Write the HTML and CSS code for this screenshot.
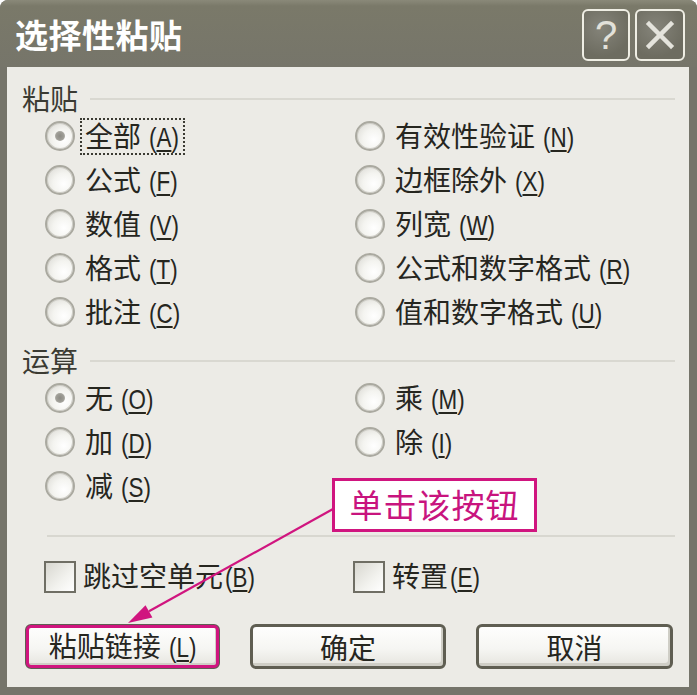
FILE: index.html
```html
<!DOCTYPE html>
<html lang="zh-CN">
<head>
<meta charset="utf-8">
<title>选择性粘贴</title>
<link rel="stylesheet" href="styles.css">
</head>
<body>
<div class="dialog">
  <div class="titlebar">
    <span class="title">选择性粘贴</span>
    <div class="tbtns">
      <span class="tbtn help">?</span>
      <span class="tbtn close"><svg width="30" height="30" viewBox="0 0 30 30"><path d="M4 4 L26 26 M26 4 L4 26" stroke="#e4e3dc" stroke-width="4.5" stroke-linecap="square"/></svg></span>
    </div>
  </div>
  <div class="content">
    <div class="group-head"><span class="group-label">粘贴</span><span class="group-line"></span></div>
    <div class="options">
      <div class="opt"><span class="radio checked"></span><span class="lbl focus">全部 <span class="mn">(<u>A</u>)</span></span></div>
      <div class="opt"><span class="radio"></span><span class="lbl">有效性验证 <span class="mn">(<u>N</u>)</span></span></div>
      <div class="opt"><span class="radio"></span><span class="lbl">公式 <span class="mn">(<u>F</u>)</span></span></div>
      <div class="opt"><span class="radio"></span><span class="lbl">边框除外 <span class="mn">(<u>X</u>)</span></span></div>
      <div class="opt"><span class="radio"></span><span class="lbl">数值 <span class="mn">(<u>V</u>)</span></span></div>
      <div class="opt"><span class="radio"></span><span class="lbl">列宽 <span class="mn">(<u>W</u>)</span></span></div>
      <div class="opt"><span class="radio"></span><span class="lbl">格式 <span class="mn">(<u>T</u>)</span></span></div>
      <div class="opt"><span class="radio"></span><span class="lbl">公式和数字格式 <span class="mn">(<u>R</u>)</span></span></div>
      <div class="opt"><span class="radio"></span><span class="lbl">批注 <span class="mn">(<u>C</u>)</span></span></div>
      <div class="opt"><span class="radio"></span><span class="lbl">值和数字格式 <span class="mn">(<u>U</u>)</span></span></div>
    </div>
    <div class="group-head second"><span class="group-label">运算</span><span class="group-line"></span></div>
    <div class="options">
      <div class="opt"><span class="radio checked"></span><span class="lbl">无 <span class="mn">(<u>O</u>)</span></span></div>
      <div class="opt"><span class="radio"></span><span class="lbl">乘 <span class="mn">(<u>M</u>)</span></span></div>
      <div class="opt"><span class="radio"></span><span class="lbl">加 <span class="mn">(<u>D</u>)</span></span></div>
      <div class="opt"><span class="radio"></span><span class="lbl">除 <span class="mn">(<u>I</u>)</span></span></div>
      <div class="opt"><span class="radio"></span><span class="lbl">减 <span class="mn">(<u>S</u>)</span></span></div>
    </div>
    <div class="sep"></div>
    <div class="checks">
      <div class="opt"><span class="check"></span><span class="lbl">跳过空单元<span class="mn">(<u>B</u>)</span></span></div>
      <div class="opt"><span class="check"></span><span class="lbl">转置<span class="mn">(<u>E</u>)</span></span></div>
    </div>
    <div class="buttons">
      <span class="btn w1 annotated"><span class="btn-text">粘贴链接 <span class="mn">(<u>L</u>)</span></span></span>
      <span class="btn w2"><span class="btn-text">确定</span></span>
      <span class="btn w3"><span class="btn-text">取消</span></span>
    </div>
  </div>
  <svg class="arrow" width="697" height="695" viewBox="0 0 697 695">
    <line x1="333" y1="509" x2="149" y2="611.3" stroke="#d0157f" stroke-width="2.2"/>
    <polygon points="128,623 152.4,617.4 145.5,605.2" fill="#d0157f"/>
  </svg>
  <div class="callout">单击该按钮</div>
</div>
</body>
</html>
```

FILE: styles.css
```css
html, body {
  margin: 0;
  padding: 0;
  background: #ffffff;
}

body {
  width: 697px;
  height: 695px;
  overflow: hidden;
  font-family: "Noto Sans CJK SC", "Noto Sans", sans-serif;
  color: #26261f;
}

.dialog {
  position: relative;
  width: 697px;
  height: 695px;
  background: #75746a;
  border-radius: 8px 8px 0 0;
  box-sizing: border-box;
}

.titlebar {
  height: 67px;
  display: flex;
  align-items: center;
  justify-content: space-between;
  padding: 0 12px 0 15px;
  background: linear-gradient(#8a8979 0, #7a7969 6px, #76756a 100%);
  border-radius: 8px 8px 0 0;
}

.title {
  color: #ffffff;
  font-size: 33px;
  font-weight: 700;
  letter-spacing: 0.5px;
  line-height: 1;
  margin-top: 2px;
}

.tbtns {
  display: flex;
  gap: 5px;
  margin-top: 3px;
}

.tbtn {
  width: 44px;
  height: 48px;
  border: 2px solid #efeee4;
  border-radius: 6px;
  background: radial-gradient(circle at 40% 35%, #85847a 0, #6d6c60 70%);
  display: flex;
  align-items: center;
  justify-content: center;
  color: #e2e1da;
}

.help {
  font-family: "Liberation Sans", sans-serif;
  font-size: 40px;
  line-height: 1;
}

.close {
  width: 46px;
}

.content {
  margin: 0 8px 8px 7px;
  height: 620px;
  background: #ecebe6;
  box-sizing: border-box;
  padding: 15px 14px 0 15px;
}

.group-head {
  height: 32px;
  display: flex;
  align-items: center;
}

.group-head.second {
  margin-top: 10px;
}

.group-label {
  font-size: 28px;
  line-height: 32px;
  color: #3b3b33;
}

.group-line {
  flex: 1;
  margin-left: 12px;
  margin-top: 2px;
  border-top: 2px solid #d9d8d1;
}

.options {
  display: grid;
  grid-template-columns: 310px 1fr;
  grid-auto-rows: 44px;
  padding-left: 23px;
}

.opt {
  display: flex;
  align-items: center;
}

.radio {
  flex: none;
  width: 26px;
  height: 26px;
  border-radius: 50%;
  border: 2px solid #aaa9a0;
  box-shadow: inset 0 0 0 1px #cfcec7;
  background: radial-gradient(circle at 65% 65%, #ffffff 0, #f4f4f0 45%, #d6d5cf 100%);
  position: relative;
}

.radio.checked::after {
  content: "";
  position: absolute;
  left: 8px;
  top: 8px;
  width: 10px;
  height: 10px;
  border-radius: 50%;
  background: radial-gradient(circle, #8c8b84 0, #9d9c95 50%, #c2c1ba 100%);
}

.lbl {
  margin-left: 5px;
  padding: 0 3px;
  border: 2px dotted transparent;
  font-size: 28px;
  line-height: 30px;
  white-space: nowrap;
}

.lbl.focus {
  border-color: #3b3b33;
}

.mn {
  display: inline-block;
  font-family: "Liberation Sans", sans-serif;
  font-size: 28px;
  transform: scaleX(0.8);
  transform-origin: left center;
  margin-right: -7px;
  margin-left: 2px;
}

.mn u {
  text-decoration-thickness: 2px;
  text-underline-offset: 3px;
}

.sep {
  margin: 27px 0 0 25px;
  border-top: 2px solid #d8d7d0;
}

.checks {
  display: grid;
  grid-template-columns: 309px 1fr;
  padding-left: 22px;
  margin-top: 21px;
  height: 32px;
}

.check {
  flex: none;
  width: 28px;
  height: 28px;
  border: 2px solid #6f6e64;
  background: linear-gradient(135deg, #d8d7d0 0, #f2f2ee 60%, #ffffff 100%);
}

.checks .lbl {
  margin-left: 2px;
}

.buttons {
  display: flex;
  gap: 30px;
  margin-top: 34px;
  padding-left: 3px;
}

.btn {
  height: 45px;
  box-sizing: border-box;
  border: 3px solid #5f5e52;
  border-radius: 6px;
  background: linear-gradient(#fefefd 0, #f6f6f3 55%, #e6e5df 100%);
  box-shadow: inset -2px -3px 0 #cfcec6;
  display: flex;
  align-items: center;
  justify-content: center;
  font-size: 28px;
  line-height: 1;
  white-space: nowrap;
}

.btn-text {
  white-space: nowrap;
}

.w1 { width: 195px; }
.w2 { width: 196px; }
.w3 { width: 197px; }

.annotated {
  outline: 3px solid #d0157f;
  outline-offset: -4px;
}

.arrow {
  position: absolute;
  left: 0;
  top: 0;
  pointer-events: none;
}

.callout {
  position: absolute;
  left: 332px;
  top: 478px;
  width: 205px;
  height: 54px;
  box-sizing: border-box;
  border: 3px solid #d0157f;
  background: #ffffff;
  color: #c8147e;
  font-size: 33px;
  line-height: 46px;
  text-align: center;
  letter-spacing: 1px;
}
```
